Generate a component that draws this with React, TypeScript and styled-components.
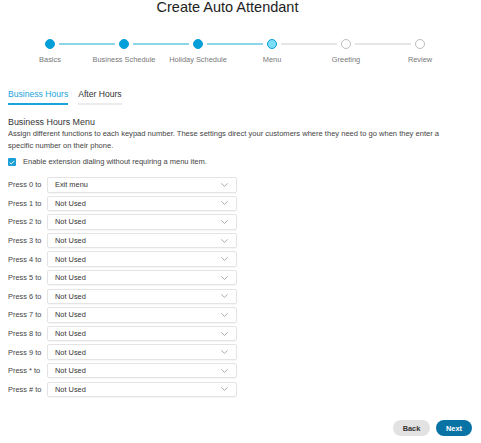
import React from "react";
import styled, { createGlobalStyle } from "styled-components";

const Global = createGlobalStyle`
  html, body { margin: 0; padding: 0; background: #fff; }
  body { font-family: "Liberation Sans", Arial, sans-serif; color: #333; }
`;

const Page = styled.div`
  width: 481px;
  height: 443px;
  box-sizing: border-box;
  padding: 0 8px;
  display: flex;
  flex-direction: column;
`;

const Title = styled.h1`
  margin: 0 0 0 -26px;
  font-size: 14.5px;
  line-height: 15px;
  font-weight: 400;
  color: #222;
  text-align: center;
`;

const Stepper = styled.div`
  margin: 24px 0 0 5px;
  display: grid;
  grid-template-columns: repeat(6, 74px);
`;

const Step = styled.div`
  position: relative;
  display: flex;
  flex-direction: column;
  align-items: center;
`;

const Dot = styled.div<{ $state: "done" | "current" | "todo" }>`
  width: 10px;
  height: 10px;
  box-sizing: border-box;
  border-radius: 50%;
  background: ${(p) => (p.$state === "done" ? "#049fd9" : p.$state === "current" ? "#7ddcf6" : "#fff")};
  border: 1px solid ${(p) => (p.$state === "todo" ? "#bdbdbd" : "#049fd9")};
`;

const Connector = styled.div<{ $done: boolean }>`
  position: absolute;
  top: 4px;
  left: calc(50% + 9px);
  width: 56px;
  height: 2px;
  background: ${(p) => (p.$done ? "#8fd5ea" : "#e6e6e6")};
`;

const StepLabel = styled.div`
  margin-top: 6px;
  font-size: 7.4px;
  line-height: 10px;
  color: #777;
  white-space: nowrap;
`;

const Tabs = styled.div`
  margin-top: 23px;
  display: flex;
  gap: 10px;
`;

const Tab = styled.div<{ $active?: boolean }>`
  font-size: 8.6px;
  line-height: 12px;
  padding-bottom: 3px;
  color: ${(p) => (p.$active ? "#1ba4da" : "#333")};
  border-bottom: 2px solid ${(p) => (p.$active ? "#1ba4da" : "#ececec")};
`;

const SectionTitle = styled.div`
  margin-top: 11px;
  font-size: 8.9px;
  line-height: 12px;
  color: #333;
`;

const Desc = styled.p`
  margin: 0;
  font-size: 7.55px;
  line-height: 12px;
  color: #444;
  max-width: 446px;
`;

const CheckRow = styled.label`
  margin-top: 5px;
  display: flex;
  align-items: center;
  gap: 7px;
  font-size: 7.5px;
  line-height: 10px;
  color: #444;
`;

const Box = styled.span`
  width: 8px;
  height: 8px;
  border-radius: 1px;
  background: #1aa0d6;
  display: flex;
  align-items: center;
  justify-content: center;
`;

const Rows = styled.div`
  margin-top: 10px;
  display: grid;
  grid-template-columns: 39px 190px;
  row-gap: 3.1px;
  align-items: center;
`;

const RowLabel = styled.div`
  font-size: 7.4px;
  color: #444;
  white-space: nowrap;
`;

const Select = styled.div`
  height: 15.5px;
  box-sizing: border-box;
  border: 1px solid #e4e4e4;
  border-radius: 2px;
  box-shadow: 0 1px 1px rgba(0, 0, 0, 0.04);
  display: flex;
  align-items: center;
  justify-content: space-between;
  padding: 0 8px 0 7px;
  font-size: 7.4px;
  color: #333;
`;

const Footer = styled.div`
  margin-top: auto;
  margin-bottom: 7px;
  display: flex;
  justify-content: flex-end;
  gap: 6px;
  padding-right: 1px;
`;

const Button = styled.button<{ $primary?: boolean }>`
  height: 16px;
  width: ${(p) => (p.$primary ? "36px" : "37px")};
  border: none;
  border-radius: 8px;
  font-family: inherit;
  font-size: 7.4px;
  font-weight: 700;
  padding: 0;
  background: ${(p) => (p.$primary ? "#0a73a6" : "#e2e2e2")};
  color: ${(p) => (p.$primary ? "#fff" : "#333")};
`;

const Chevron = () => (
  <svg width="7" height="4" viewBox="0 0 7 4">
    <path d="M0.4 0.4 L3.5 3.4 L6.6 0.4" fill="none" stroke="#888" strokeWidth="0.7" />
  </svg>
);

const steps: { label: string; state: "done" | "current" | "todo" }[] = [
  { label: "Basics", state: "done" },
  { label: "Business Schedule", state: "done" },
  { label: "Holiday Schedule", state: "done" },
  { label: "Menu", state: "current" },
  { label: "Greeting", state: "todo" },
  { label: "Review", state: "todo" },
];

const keys = ["0", "1", "2", "3", "4", "5", "6", "7", "8", "9", "*", "#"];

export default function App() {
  return (
    <>
      <Global />
      <Page>
        <Title>Create Auto Attendant</Title>
        <Stepper>
          {steps.map((s, i) => (
            <Step key={s.label}>
              <Dot $state={s.state} />
              {i < steps.length - 1 && <Connector $done={i < 3} />}
              <StepLabel>{s.label}</StepLabel>
            </Step>
          ))}
        </Stepper>
        <Tabs>
          <Tab $active>Business Hours</Tab>
          <Tab>After Hours</Tab>
        </Tabs>
        <SectionTitle>Business Hours Menu</SectionTitle>
        <Desc>
          Assign different functions to each keypad number. These settings direct your customers where they need to go
          when they enter a specific number on their phone.
        </Desc>
        <CheckRow>
          <Box>
            <svg width="6" height="5" viewBox="0 0 6 5">
              <path d="M0.7 2.6 L2.3 4 L5.3 0.9" fill="none" stroke="#fff" strokeWidth="1" />
            </svg>
          </Box>
          Enable extension dialing without requiring a menu item.
        </CheckRow>
        <Rows>
          {keys.map((k) => (
            <React.Fragment key={k}>
              <RowLabel>Press {k} to</RowLabel>
              <Select>
                <span>{k === "0" ? "Exit menu" : "Not Used"}</span>
                <Chevron />
              </Select>
            </React.Fragment>
          ))}
        </Rows>
        <Footer>
          <Button>Back</Button>
          <Button $primary>Next</Button>
        </Footer>
      </Page>
    </>
  );
}
